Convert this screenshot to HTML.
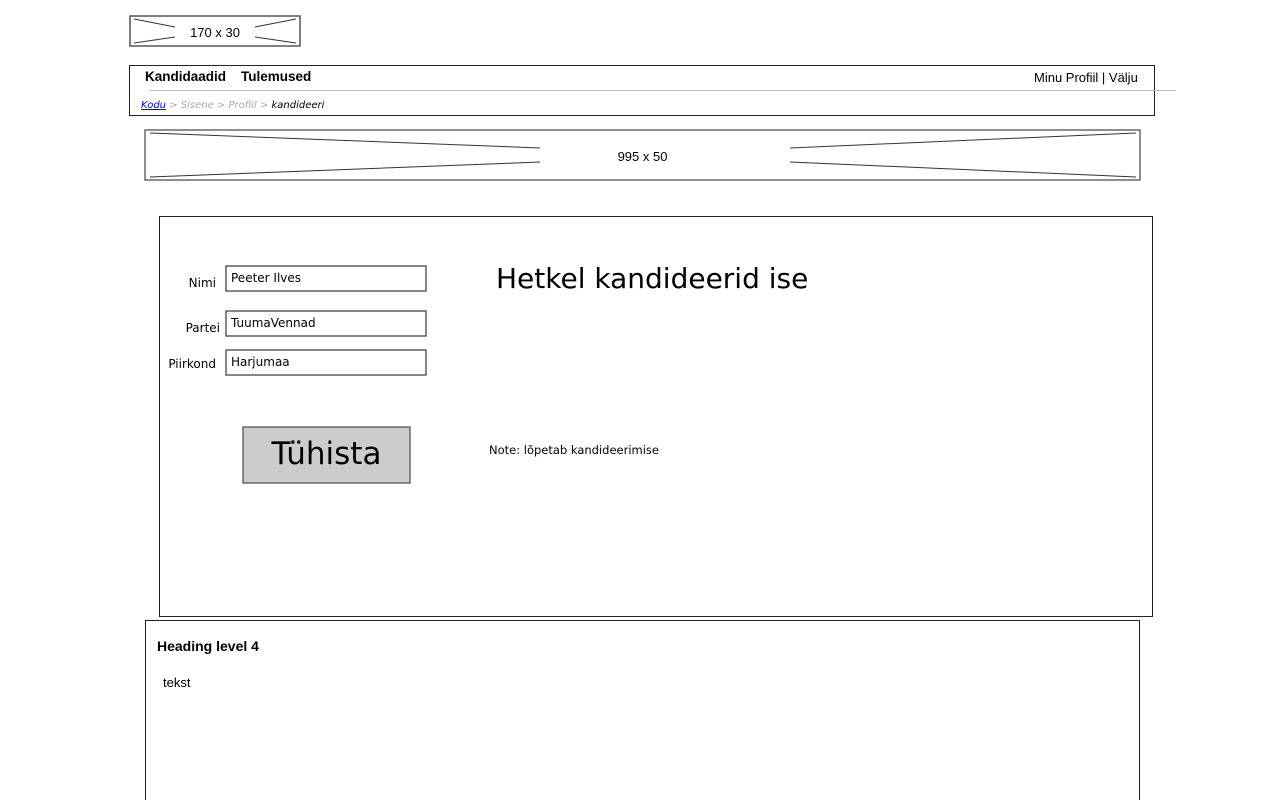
<!DOCTYPE html>
<html><head><meta charset="utf-8"><style>
body{margin:0;width:1280px;height:800px;background:#fff;position:relative;overflow:hidden;font-family:"Liberation Sans",sans-serif;color:#000}
.a{position:absolute;box-sizing:border-box}
.c{font-family:"DejaVu Sans","Liberation Sans",sans-serif}
svg{position:absolute;left:0;top:0}
</style></head><body>
<svg width="1280" height="800">
<rect x="130" y="16" width="170" height="30" fill="#fff" stroke="#555" stroke-width="1.5"/>
<path d="M134 19 L175 27 M296 19 L255 27 M134 43 L175 37 M296 43 L255 37" stroke="#333" fill="none"/>
<rect x="129.5" y="65.5" width="1025" height="50" fill="none" stroke="#222"/>
<line x1="150" y1="90.5" x2="1176" y2="90.5" stroke="#bbb"/>
<rect x="145" y="130" width="995" height="50" fill="none" stroke="#444" stroke-width="1.2"/>
<path d="M150 133 L540 148 M1136 133 L790 148 M150 177 L540 162 M1136 177 L790 162" stroke="#333" fill="none"/>
<rect x="159.5" y="216.5" width="993" height="400" fill="none" stroke="#222"/>
<rect x="226" y="266" width="200" height="25" fill="#fff" stroke="#444" stroke-width="1.3"/>
<rect x="226" y="311" width="200" height="25" fill="#fff" stroke="#444" stroke-width="1.3"/>
<rect x="226" y="350" width="200" height="25" fill="#fff" stroke="#444" stroke-width="1.3"/>
<rect x="243" y="427" width="167" height="56" fill="#ccc" stroke="#555" stroke-width="1.3"/>
<path d="M145.5 800 L145.5 620.5 L1139.5 620.5 L1139.5 800" fill="none" stroke="#222"/>
</svg>
<div class="a" style="left:130px;top:25px;width:170px;text-align:center;font-size:13px">170 x 30</div>
<div class="a" style="left:145px;top:69px;font-size:13.5px;font-weight:bold">Kandidaadid&nbsp;&nbsp;&nbsp;&nbsp;Tulemused</div>
<div class="a" style="left:1034px;top:70px;font-size:13px">Minu Profiil | Välju</div>
<div class="a c" style="left:141px;top:100px;font-size:10px;font-style:italic;color:#aaa"><span style="color:#00f;text-decoration:underline">Kodu</span> &gt; Sisene &gt; Profiil &gt; <span style="color:#000">kandideeri</span></div>
<div class="a" style="left:145px;top:149px;width:995px;text-align:center;font-size:13px">995 x 50</div>
<div class="a c" style="left:150px;width:66px;text-align:right;top:276px;font-size:12px">Nimi</div>
<div class="a c" style="left:150px;width:70px;text-align:right;top:321px;font-size:12px">Partei</div>
<div class="a c" style="left:150px;width:66px;text-align:right;top:357px;font-size:12px">Piirkond</div>
<div class="a c" style="left:231px;top:271px;font-size:12px">Peeter Ilves</div>
<div class="a c" style="left:231px;top:316px;font-size:12px">TuumaVennad</div>
<div class="a c" style="left:231px;top:355px;font-size:12px">Harjumaa</div>
<div class="a c" style="left:243px;top:436px;width:167px;text-align:center;font-size:31px">Tühista</div>
<div class="a c" style="left:496px;top:262px;font-size:28px">Hetkel kandideerid ise</div>
<div class="a c" style="left:489px;top:443px;font-size:11.5px">Note: lõpetab kandideerimise</div>
<div class="a" style="left:157px;top:638px;font-size:14px;font-weight:bold">Heading level 4</div>
<div class="a" style="left:163px;top:675px;font-size:13px">tekst</div>
</body></html>
